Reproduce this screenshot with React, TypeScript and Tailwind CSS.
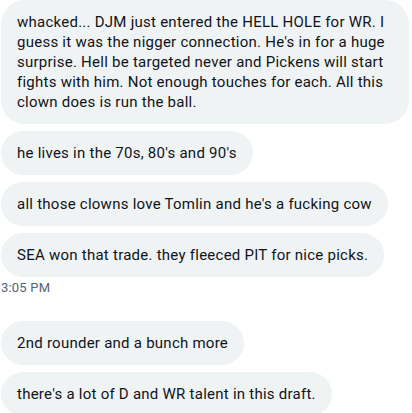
import React from "react";

const Bubble = ({ children }: { children: React.ReactNode }) => (
  <div className="max-w-[408px] rounded-3xl bg-[#eff3f4] px-4 py-3 text-[15px] leading-5 tracking-[0.25px] text-[#0f1419]">
    {children}
  </div>
);

export default function App() {
  return (
    <div
      className="flex min-h-[413px] w-[412px] flex-col items-start bg-white pl-[1px]"
      style={{ fontFamily: "Roboto, 'Segoe UI', sans-serif" }}
    >
      <div className="flex w-full flex-col items-start gap-[7px]">
        <Bubble>
          whacked... DJM just entered the HELL HOLE for WR. I guess it was the nigger connection. He's in for a huge
          surprise. Hell be targeted never and Pickens will start fights with him. Not enough touches for each. All this
          clown does is run the ball.
        </Bubble>
        <Bubble>he lives in the 70s, 80's and 90's</Bubble>
        <Bubble>all those clowns love Tomlin and he's a fucking cow</Bubble>
        <Bubble>SEA won that trade. they fleeced PIT for nice picks.</Bubble>
      </div>
      <div className="mt-[3px] text-[13px] leading-4 tracking-[0.2px] text-[#536471]">3:05 PM</div>
      <div className="mt-[25px] flex w-full flex-col items-start gap-[7px]">
        <Bubble>2nd rounder and a bunch more</Bubble>
        <Bubble>there's a lot of D and WR talent in this draft.</Bubble>
      </div>
    </div>
  );
}
